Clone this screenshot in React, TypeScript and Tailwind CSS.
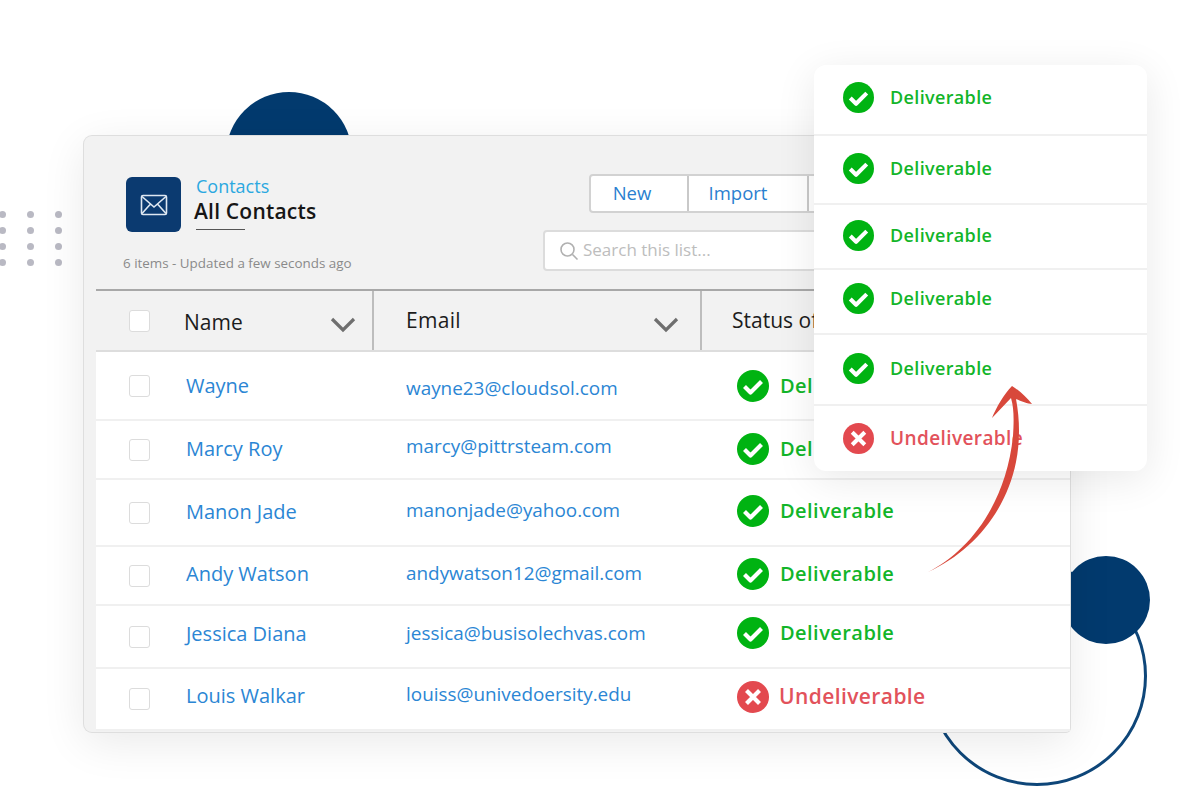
import React from "react";

const rows = [
  { name: "Wayne", email: "wayne23@cloudsol.com", ok: true, h: "h-[69px]", ns: "", es: "pt-[6px]", ss: "" },
  { name: "Marcy Roy", email: "marcy@pittrsteam.com", ok: true, h: "h-[59px]", ns: "pb-[2px]", es: "pb-[6px]", ss: "pb-[2px]" },
  { name: "Manon Jade", email: "manonjade@yahoo.com", ok: true, h: "h-[67px]", ns: "pb-[2px]", es: "pb-[4px]", ss: "pb-[4px]" },
  { name: "Andy Watson", email: "andywatson12@gmail.com", ok: true, h: "h-[59px]", ns: "pb-[4px]", es: "pb-[4px]", ss: "pb-[4px]" },
  { name: "Jessica Diana", email: "jessica@busisolechvas.com", ok: true, h: "h-[63px]", ns: "pb-[6px]", es: "pb-[6px]", ss: "pb-[8px]" },
  { name: "Louis Walkar", email: "louiss@univedoersity.edu", ok: false, h: "h-[62px]", ns: "pb-[6px]", es: "pb-[10px]", ss: "pb-[4px]" },
];

const popup = [
  { ok: true, h: "h-[71px]", pb: "pb-[5px]" },
  { ok: true, h: "h-[69px]", pb: "pb-[2px]" },
  { ok: true, h: "h-[65px]", pb: "pb-[3px]" },
  { ok: true, h: "h-[65px]", pb: "pb-[7px]" },
  { ok: true, h: "h-[71px]", pb: "pb-[3px]" },
  { ok: false, h: "h-[65px]", pb: "" },
];

function StatusIcon({ ok, size }: { ok: boolean; size: number }) {
  return (
    <svg width={size} height={size} viewBox="0 0 32 32" className="shrink-0">
      <circle cx="16" cy="16" r="16" fill={ok ? "#00b312" : "#e3494f"} />
      {ok ? (
        <path d="M7.5 16.5 L13.5 22.5 L24.5 11.5" fill="none" stroke="#fff" strokeWidth="4.2" strokeLinejoin="round" />
      ) : (
        <path d="M9.5 9.5 L22.5 22.5 M22.5 9.5 L9.5 22.5" fill="none" stroke="#fff" strokeWidth="4.2" />
      )}
    </svg>
  );
}

function Checkbox() {
  return <div className="w-[21px] h-[22px] shrink-0 bg-white rounded-[3px] border border-[#dcdcdc]" />;
}

function Chevron() {
  return (
    <svg width="26" height="16" viewBox="0 0 26 16" className="shrink-0">
      <path d="M2 2 L13 13 L24 2" fill="none" stroke="#6f6f6f" strokeWidth="3.2" />
    </svg>
  );
}

export default function App() {
  return (
    <div className="relative w-[1200px] h-[801px] overflow-hidden bg-white font-['Open_Sans',sans-serif]">
      {/* decorative shapes */}
      <div className="absolute left-[226px] top-[92px] w-[126px] h-[126px] rounded-full bg-[#023a6e]" />
      <div className="absolute left-[927px] top-[566px] w-[220px] h-[220px] rounded-full border-[3px] border-[#0e4679]" />
      <div className="absolute left-[1062px] top-[556px] w-[88px] h-[88px] rounded-full bg-[#023a6e]" />
      <div className="absolute left-[-1px] top-[211px] grid grid-cols-3 gap-x-[21px] gap-y-[9px]">
        {Array.from({ length: 12 }).map((_, i) => (
          <div key={i} className="w-[7px] h-[7px] rounded-full bg-[#b9b9c3]" />
        ))}
      </div>

      {/* main card */}
      <div className="pl-[84px] pt-[136px]">
        <div className="relative w-[986px] h-[596px] bg-[#f2f2f2] rounded-l-[8px] rounded-br-[4px] shadow-[0_0_0_1px_#dedede,0_10px_45px_rgba(0,0,0,0.09)]">
          <div className="flex h-[153px]">
            <div className="w-[459px] pl-[39px] pt-[41px]">
              <div className="flex ml-[3px]">
                <div className="w-[55px] h-[55px] rounded-[6px] bg-[#0b3a70] flex items-center justify-center">
                  <svg width="28" height="22" viewBox="0 0 28 22" fill="none" stroke="#dfe8f2" strokeWidth="1.6">
                    <rect x="1.5" y="1.5" width="25" height="19" rx="1.5" />
                    <path d="M2 2.5 L14 13 L26 2.5 M2 19.5 L10.5 10 M26 19.5 L17.5 10" />
                  </svg>
                </div>
                <div className="ml-[13px] -mt-[2px]">
                  <div className="ml-[2px] text-[18px] leading-[22px] font-medium text-[#2aa8e0]">Contacts</div>
                  <div className="text-[21px] leading-[29px] font-semibold text-[#161616] tracking-[0.2px]">All Contacts</div>
                  <div className="ml-[2px] mt-[3px] w-[49px] h-[1px] bg-[#555]" />
                </div>
              </div>
              <div className="mt-[22px] text-[13.4px] leading-[18px] text-[#8a8a8a]">6 items - Updated a few seconds ago</div>
            </div>
            <div className="pt-[38px]">
              <div className="flex ml-[46px] h-[39px] w-[300px] bg-white rounded-[4px] border-2 border-[#d2d2d2]">
                <div className="w-[98px] flex items-center justify-center pr-[14px] pb-[2px] text-[#2a7fd0] font-medium text-[18.5px] border-r-2 border-[#c9c9c9]">New</div>
                <div className="w-[120px] flex items-center justify-center pr-[20px] pb-[2px] text-[#2a7fd0] font-medium text-[18.5px] border-r-2 border-[#c9c9c9]">Import</div>
              </div>
              <div className="mt-[17px] h-[41px] w-[300px] flex items-center pl-[14px] bg-white rounded-[4px] border-2 border-[#dcdcdc]">
                <svg width="20" height="20" viewBox="0 0 20 20" fill="none" stroke="#b0b0b0" strokeWidth="1.6" className="shrink-0">
                  <circle cx="8.5" cy="8.5" r="6.5" />
                  <path d="M13.5 13.5 L18.5 18.5" />
                </svg>
                <span className="ml-[4px] pb-[2px] text-[17px] text-[#bdbdbd]">Search this list...</span>
              </div>
            </div>
          </div>

          <div className="ml-[12px]">
            {/* header row */}
            <div className="flex h-[63px] border-t-2 border-b-2 border-t-[#a8a8a8] border-b-[#dddddd] text-[21px] font-medium text-[#1c1c1c]">
              <div className="w-[278px] flex items-center pl-[33px] pr-[16px] border-r-2 border-[#bdbdbd]">
                <Checkbox />
                <span className="ml-[34px] flex-1 pt-[4px]">Name</span>
                <span className="pt-[8px]"><Chevron /></span>
              </div>
              <div className="w-[328px] flex items-center pl-[32px] pr-[21px] border-r-2 border-[#bdbdbd]">
                <span className="flex-1 tracking-[0.3px]">Email</span>
                <span className="pt-[8px]"><Chevron /></span>
              </div>
              <div className="flex items-center pl-[30px]">Status of Email</div>
            </div>

            {/* data rows */}
            <div className="bg-white">
              {rows.map((r) => (
                <div key={r.name} className={`flex items-center ${r.h} border-b-2 border-[#f0f0f0]`}>
                  <div className="w-[90px] pl-[33px]">
                    <Checkbox />
                  </div>
                  <div className={`w-[220px] text-[20px] text-[#2b86d4] ${r.ns}`}>{r.name}</div>
                  <div className={`w-[331px] text-[18.9px] text-[#2b86d4] ${r.es}`}>{r.email}</div>
                  <div className={`flex items-center ${r.ss}`}>
                    <StatusIcon ok={r.ok} size={32} />
                    {r.ok ? (
                      <span className="ml-[11px] text-[20px] font-semibold tracking-[0.45px] text-[#12b529]">Deliverable</span>
                    ) : (
                      <span className="ml-[10px] text-[21px] font-semibold tracking-[0.4px] text-[#e2525b]">Undeliverable</span>
                    )}
                  </div>
                </div>
              ))}
            </div>
          </div>
        </div>
      </div>

      {/* popup */}
      <div className="absolute left-[814px] top-[65px] w-[333px] bg-white rounded-[12px] shadow-[0_8px_40px_rgba(0,0,0,0.09)]">
        {popup.map((p, i) => (
          <div
            key={i}
            className={`flex items-center pl-[29px] ${p.h} ${p.pb} ${i < popup.length - 1 ? "border-b-2 border-[#f0f0f0]" : ""}`}
          >
            <StatusIcon ok={p.ok} size={31} />
            {p.ok ? (
              <span className="ml-[16px] text-[18px] font-semibold tracking-[0.35px] text-[#12b529]">Deliverable</span>
            ) : (
              <span className="ml-[16px] text-[19px] font-semibold tracking-[0.4px] text-[#e2525b]">Undeliverable</span>
            )}
          </div>
        ))}
      </div>

      {/* arrow */}
      <svg className="absolute left-0 top-0 pointer-events-none" width="1200" height="801" viewBox="0 0 1200 801">
        <path
          d="M928 572 C968 552 1006 505 1013 436 C1014 420 1014 408 1011 398 L992 418 C996 408 1004 394 1012 386 C1019 390 1027 398 1032 404 C1028 404 1021 401 1016 399 C1020 420 1020 442 1016 462 C1006 512 972 552 928 572 Z"
          fill="#d8483b"
        />
      </svg>
    </div>
  );
}
